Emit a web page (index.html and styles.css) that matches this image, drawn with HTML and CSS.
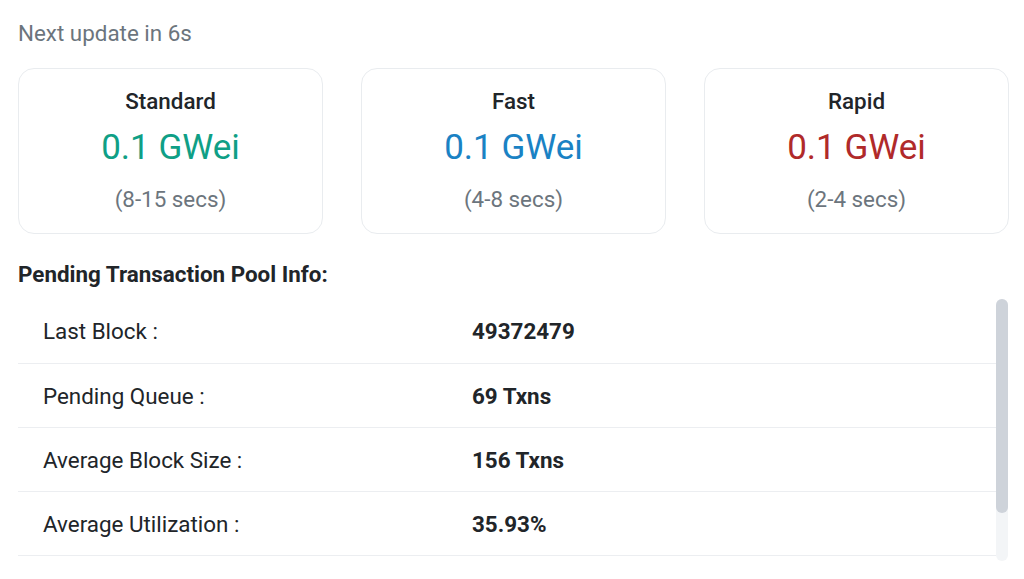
FILE: index.html
```html
<!DOCTYPE html>
<html lang="en">
<head>
  <meta charset="UTF-8" />
  <meta name="viewport" content="width=device-width, initial-scale=1.0" />
  <title>Gas Tracker</title>
  <link rel="stylesheet" href="styles.css">
</head>
<body>
  <main class="gas-tracker">
    <p class="next-update">Next update in 6s</p>

    <div class="gas-cards">
      <div class="gas-card">
        <h3>Standard</h3>
        <div class="gas-price standard">0.1 GWei</div>
        <div class="gas-time">(8-15 secs)</div>
      </div>
      <div class="gas-card">
        <h3>Fast</h3>
        <div class="gas-price fast">0.1 GWei</div>
        <div class="gas-time">(4-8 secs)</div>
      </div>
      <div class="gas-card">
        <h3>Rapid</h3>
        <div class="gas-price rapid">0.1 GWei</div>
        <div class="gas-time">(2-4 secs)</div>
      </div>
    </div>

    <h4 class="pool-title">Pending Transaction Pool Info:</h4>
    <div class="pool-box">
      <div class="pool-info">
        <div class="pool-row"><span class="pool-label">Last Block :</span><span class="pool-value">49372479</span></div>
        <div class="pool-row"><span class="pool-label">Pending Queue :</span><span class="pool-value">69 Txns</span></div>
        <div class="pool-row"><span class="pool-label">Average Block Size :</span><span class="pool-value">156 Txns</span></div>
        <div class="pool-row"><span class="pool-label">Average Utilization :</span><span class="pool-value">35.93%</span></div>
      </div>
      <div class="scroll-track"><div class="scroll-thumb"></div></div>
    </div>
  </main>
</body>
</html>
```

FILE: styles.css
```css
* {
  margin: 0;
  padding: 0;
  box-sizing: border-box;
}
body {
  font-family: Roboto, 'Liberation Sans', sans-serif;
  background: #ffffff;
  color: #212529;
}
.gas-tracker {
  padding: 20px 16px 0 18px;
}
.next-update {
  font-size: 22.4px;
  line-height: 26px;
  color: #6c757d;
}
.gas-cards {
  display: grid;
  grid-template-columns: repeat(3, 305px);
  column-gap: 38px;
  margin-top: 22px;
}
.gas-card {
  height: 166px;
  padding-top: 18px;
  border: 1px solid #e9ecef;
  border-radius: 16px;
  text-align: center;
}
.gas-card h3 {
  font-size: 22.4px;
  line-height: 28px;
  font-weight: 500;
  color: #212529;
}
.gas-price {
  margin-top: 12px;
  font-size: 35px;
  line-height: 42px;
}
.gas-price.standard { color: #0f9f86; }
.gas-price.fast { color: #1a82c4; }
.gas-price.rapid { color: #b02a2a; }
.gas-time {
  margin-top: 16px;
  font-size: 22.4px;
  line-height: 28px;
  color: #6c757d;
}
.pool-title {
  margin-top: 26px;
  font-size: 22.4px;
  line-height: 28px;
  font-weight: 700;
  color: #212529;
}
.pool-box {
  display: flex;
  width: 990px;
  height: 262px;
  margin-top: 11px;
}
.pool-info {
  flex: 1;
  overflow: hidden;
}
.scroll-track {
  width: 12px;
  background: #f3f5f7;
  border-radius: 6px;
}
.scroll-thumb {
  height: 214px;
  background: #ced3da;
  border-radius: 6px;
}
.pool-row {
  display: flex;
  align-items: center;
  height: 64px;
  padding-left: 25px;
  border-bottom: 1px solid #eceef1;
  font-size: 22.4px;
}
.pool-row:first-child {
  height: 65px;
}
.pool-label {
  width: 429px;
  color: #212529;
}
.pool-value {
  font-weight: 700;
  color: #212529;
}
```
